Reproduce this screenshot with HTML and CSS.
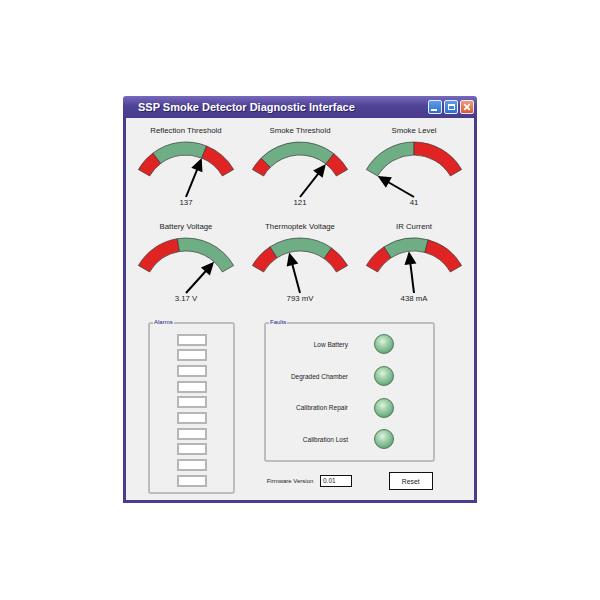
FILE: index.html
```html
<!DOCTYPE html>
<html lang="en">
<head>
    <meta charset="UTF-8">
    <meta name="viewport" content="width=device-width, initial-scale=1.0">
    <title>SSP Smoke Detector Diagnostic Interface</title>
    <link rel="stylesheet" href="styles.css">
</head>
<body>
    <div class="window">
        <div class="title-bar">
            <span class="title">SSP Smoke Detector Diagnostic Interface</span>
            <div class="title-buttons">
                <span class="tb-btn tb-min"></span>
                <span class="tb-btn tb-max"></span>
                <span class="tb-btn tb-close">
                    <svg viewBox="0 0 12 12" width="12" height="12"><path d="M3.2 3.2 L8.8 8.8 M8.8 3.2 L3.2 8.8" stroke="#fff" stroke-width="1.8" fill="none"/></svg>
                </span>
            </div>
        </div>
        <div class="content">
            <div class="gauges" id="gauges"></div>

            <div class="bottom">
                <div class="group alarms">
                    <span class="group-title">Alarms</span>
                    <div class="alarm-list">
                        <div class="alarm-box"></div>
                        <div class="alarm-box"></div>
                        <div class="alarm-box"></div>
                        <div class="alarm-box"></div>
                        <div class="alarm-box"></div>
                        <div class="alarm-box"></div>
                        <div class="alarm-box"></div>
                        <div class="alarm-box"></div>
                        <div class="alarm-box"></div>
                        <div class="alarm-box"></div>
                    </div>
                </div>

                <div class="right-col">
                    <div class="group faults">
                        <span class="group-title">Faults</span>
                        <div class="fault-grid">
                            <div class="fault-label">Low Battery</div><div class="led"></div>
                            <div class="fault-label">Degraded Chamber</div><div class="led"></div>
                            <div class="fault-label">Calibration Repair</div><div class="led"></div>
                            <div class="fault-label">Calibration Lost</div><div class="led"></div>
                        </div>
                    </div>
                    <div class="firmware-row">
                        <span class="fw-label">Firmware Version</span>
                        <div class="fw-input">0.01</div>
                        <button class="reset-btn">Reset</button>
                    </div>
                </div>
            </div>
        </div>
    </div>

    <script>
        const RED = "#e02424";
        const GREEN = "#6fae84";
        const CX = 57, CY = 57, RO = 55, RI = 42;

        const gauges = [
            { label: "Reflection Threshold", value: "137", needle: 22, zones: [[RED, -60, -37], [GREEN, -37, 22], [RED, 22, 60]] },
            { label: "Smoke Threshold", value: "121", needle: 38, zones: [[RED, -60, -45], [GREEN, -45, 38], [RED, 38, 60]] },
            { label: "Smoke Level", value: "41", needle: -60, zones: [[GREEN, -60, 0], [RED, 0, 60]] },
            { label: "Battery Voltage", value: "3.17 V", needle: 42, zones: [[RED, -60, -9], [GREEN, -9, 60]] },
            { label: "Thermoptek Voltage", value: "793 mV", needle: -15, zones: [[RED, -60, -33], [GREEN, -33, 35], [RED, 35, 60]] },
            { label: "IR Current", value: "438 mA", needle: -7, zones: [[RED, -60, -33], [GREEN, -33, 15], [RED, 15, 60]] }
        ];

        // angle in degrees from vertical, clockwise
        function pt(a, r) {
            const rad = a * Math.PI / 180;
            return [CX + r * Math.sin(rad), CY - r * Math.cos(rad)];
        }
        function f(p) {
            return p[0].toFixed(2) + " " + p[1].toFixed(2);
        }

        function zonePath(a1, a2) {
            return "M" + f(pt(a1, RO)) + " A" + RO + " " + RO + " 0 0 1 " + f(pt(a2, RO)) +
                " L" + f(pt(a2, RI)) + " A" + RI + " " + RI + " 0 0 0 " + f(pt(a1, RI)) + " Z";
        }

        function needle(a) {
            const rad = a * Math.PI / 180;
            const tip = pt(a, RI);
            const base = pt(a, RI - 13);
            const px = Math.cos(rad) * 6, py = Math.sin(rad) * 6;
            const lineEnd = pt(a, RI - 11);
            return '<line x1="' + CX + '" y1="' + CY + '" x2="' + lineEnd[0].toFixed(2) + '" y2="' + lineEnd[1].toFixed(2) + '" stroke="#000" stroke-width="2"/>' +
                '<polygon points="' + f(tip) + ' ' + f([base[0] + px, base[1] + py]) + ' ' + f([base[0] - px, base[1] - py]) + '" fill="#000"/>';
        }

        const holder = document.getElementById("gauges");
        gauges.forEach(g => {
            let svg = '<svg viewBox="0 0 114 58">';
            g.zones.forEach(z => {
                svg += '<path d="' + zonePath(z[1], z[2]) + '" fill="' + z[0] + '" stroke="#3a3a3a" stroke-width="0.7"/>';
            });
            svg += needle(g.needle) + '</svg>';
            const cell = document.createElement("div");
            cell.className = "gauge";
            cell.innerHTML = '<div class="gauge-label">' + g.label + '</div>' + svg + '<div class="gauge-value">' + g.value + '</div>';
            holder.appendChild(cell);
        });
    </script>
</body>
</html>
```

FILE: styles.css
```css
body {
    margin: 0;
    background: #ffffff;
    font-family: "Liberation Sans", Arial, sans-serif;
    color: #1e1e1e;
}
.window {
    width: 354px;
    margin: 96px 0 0 123px;
}
.title-bar {
    height: 22px;
    display: flex;
    align-items: center;
    justify-content: space-between;
    padding: 0 3px 0 15px;
    background: linear-gradient(#7769bd, #4f4396 45%, #483b8c);
    border-radius: 3px 3px 0 0;
}
.title {
    color: #ffffff;
    font-weight: bold;
    font-size: 11px;
    text-shadow: 1px 1px 0 #2c2266;
}
.title-buttons {
    display: flex;
    gap: 2px;
}
.tb-btn {
    width: 14px;
    height: 14px;
    box-sizing: border-box;
    border: 1px solid #e8ecf8;
    border-radius: 2px;
    display: flex;
    align-items: center;
    justify-content: center;
}
.tb-min {
    background: linear-gradient(#5c9ce8, #2f6fcf);
    align-items: flex-end;
    justify-content: flex-start;
    padding: 0 0 2px 2px;
}
.tb-min::after {
    content: "";
    width: 6px;
    height: 2px;
    background: #ffffff;
}
.tb-max {
    background: linear-gradient(#5c9ce8, #2f6fcf);
}
.tb-max::after {
    content: "";
    width: 7px;
    height: 6px;
    box-sizing: border-box;
    border: 1px solid #ffffff;
    border-top-width: 2px;
}
.tb-close {
    background: linear-gradient(#f29a78, #da5a34);
}
.tb-close svg {
    display: block;
}

.content {
    height: 385px;
    box-sizing: border-box;
    background: #f0f0f0;
    border: 3px solid #4a3d8e;
    border-top: 0;
    padding-top: 8px;
}
.gauges {
    display: grid;
    grid-template-columns: repeat(3, 114px);
    row-gap: 14px;
    padding: 0 3px;
}
.gauge {
    display: flex;
    flex-direction: column;
    align-items: center;
}
.gauge-label,
.gauge-value {
    font-size: 7.8px;
    line-height: 10px;
    color: #1e1e1e;
    white-space: nowrap;
}
.gauge svg {
    display: block;
    width: 114px;
    height: 58px;
    margin-top: 4px;
    overflow: visible;
}

.bottom {
    display: flex;
    gap: 29px;
    padding-left: 22px;
    margin-top: 18px;
}
.group {
    position: relative;
    box-sizing: border-box;
    border: 2px solid #bdbdbd;
    border-radius: 3px;
}
.group-title {
    position: absolute;
    top: -5px;
    left: 3px;
    padding: 0 1px;
    font-size: 6px;
    line-height: 7px;
    color: #22208a;
    background: #f0f0f0;
}
.alarms {
    width: 87px;
    height: 172px;
}
.alarm-list {
    display: flex;
    flex-direction: column;
    align-items: center;
    gap: 3.7px;
    padding-top: 9.6px;
}
.alarm-box {
    width: 30px;
    height: 12px;
    box-sizing: border-box;
    border: 2px solid #b6b6b6;
    background: #ffffff;
}
.right-col {
    display: flex;
    flex-direction: column;
    width: 171px;
}
.faults {
    height: 140px;
}
.fault-grid {
    display: grid;
    grid-template-columns: 82px 20px;
    grid-auto-rows: 31.7px;
    column-gap: 26px;
    align-items: center;
    padding-top: 4.5px;
}
.fault-label {
    text-align: right;
    font-size: 6.5px;
    color: #222222;
    white-space: nowrap;
}
.led {
    width: 20px;
    height: 20px;
    box-sizing: border-box;
    border-radius: 50%;
    border: 1px solid #4a7a59;
    background: radial-gradient(circle at 42% 35%, #e0f2e4 0%, #9fd0aa 35%, #6aa87b 75%, #4f8a60 100%);
}
.firmware-row {
    display: flex;
    align-items: center;
    height: 18px;
    margin-top: 10px;
    padding-left: 2.7px;
}
.fw-label {
    font-size: 6px;
    color: #222222;
}
.fw-input {
    width: 32px;
    height: 12px;
    box-sizing: border-box;
    margin-left: 6.6px;
    padding-left: 2px;
    border: 1.5px solid #111111;
    background: #ffffff;
    font-size: 6.5px;
    line-height: 9px;
}
.reset-btn {
    width: 44px;
    height: 18px;
    margin-left: auto;
    margin-right: 2.3px;
    padding: 0;
    border: 1.5px solid #111111;
    background: #ffffff;
    font-family: inherit;
    font-size: 6.8px;
    color: #222222;
}
```
